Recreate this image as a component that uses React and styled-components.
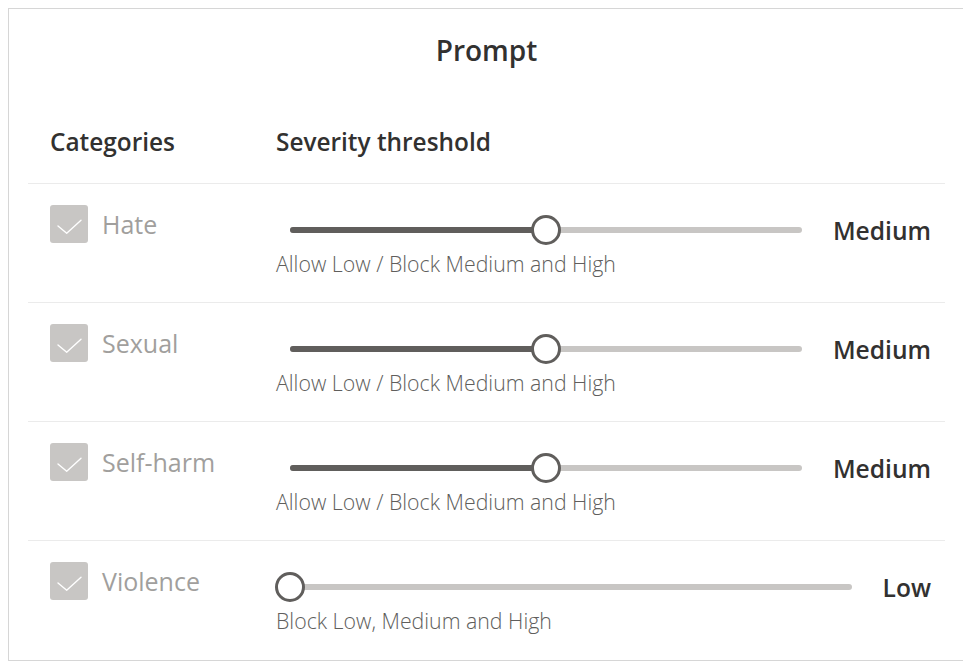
import React from "react";
import styled, { createGlobalStyle } from "styled-components";

const GlobalStyle = createGlobalStyle`
  body {
    margin: 8px;
    background: #ffffff;
    font-family: "Open Sans", "Noto Sans", sans-serif;
    color: #323130;
  }
`;

const Card = styled.div`
  width: 958px;
  height: 653px;
  border: 1px solid #d6d6d6;
  padding: 0 20px 0 19px;
  box-sizing: border-box;
`;

const Title = styled.h2`
  margin: 0;
  padding-top: 23px;
  height: 36px;
  line-height: 36px;
  text-align: center;
  font-size: 28px;
  font-weight: 600;
  color: #323130;
`;

const HeaderRow = styled.div`
  display: grid;
  grid-template-columns: 226px 1fr;
  padding: 0 14px 0 22px;
  height: 115px;
  align-items: end;
  font-size: 24.4px;
  font-weight: 600;
  color: #323130;
  line-height: 32px;
  span {
    padding-bottom: 25px;
  }
`;

const Row = styled.div`
  display: grid;
  grid-template-columns: 226px 1fr;
  height: 119px;
  box-sizing: border-box;
  border-top: 1px solid #ebebeb;
  padding: 20px 14px 0 22px;
`;

const CategoryCell = styled.label`
  display: flex;
  align-items: center;
  gap: 14px;
  height: 39px;
  align-self: start;
  font-size: 25px;
  font-weight: 400;
  color: #a19f9d;
`;

const Box = styled.span`
  width: 38px;
  height: 38px;
  border-radius: 3px;
  background: #c8c6c4;
  display: flex;
  align-items: center;
  justify-content: center;
  flex-shrink: 0;
`;

const ThresholdCell = styled.div`
  display: flex;
  flex-direction: column;
  padding-top: 12px;
`;

const SliderLine = styled.div`
  display: flex;
  align-items: center;
  height: 28px;
  gap: 17px;
`;

const SliderArea = styled.div`
  flex: 1;
  padding: 0 14px;
  height: 30px;
  display: flex;
  align-items: center;
`;

const Track = styled.div`
  position: relative;
  width: 100%;
  height: 6px;
  border-radius: 3px;
  background: #c8c6c4;
`;

const Fill = styled.div`
  position: absolute;
  left: 0;
  top: 0;
  bottom: 0;
  border-radius: 3px;
  background: #605e5c;
`;

const Thumb = styled.div`
  position: absolute;
  top: 50%;
  width: 30px;
  height: 30px;
  box-sizing: border-box;
  border-radius: 50%;
  border: 3px solid #605e5c;
  background: #ffffff;
  transform: translate(-50%, -50%);
`;

const Value = styled.span`
  font-size: 24.6px;
  font-weight: 600;
  color: #323130;
  white-space: nowrap;
`;

const Hint = styled.div`
  margin-top: 6px;
  line-height: 28px;
  font-size: 21.3px;
  font-weight: 300;
  color: #605e5c;
`;

const Check = () => (
  <svg width="38" height="38" viewBox="0 0 38 38" fill="none">
    <path
      d="M8 21 L16.7 28.3 L31 15.3"
      stroke="#ffffff"
      strokeWidth="1.4"
      strokeLinecap="round"
      strokeLinejoin="round"
    />
  </svg>
);

const levels = {
  Low: { pos: 0, hint: "Block Low, Medium and High" },
  Medium: { pos: 50, hint: "Allow Low / Block Medium and High" },
};

const categories = [
  { name: "Hate", level: "Medium" },
  { name: "Sexual", level: "Medium" },
  { name: "Self-harm", level: "Medium" },
  { name: "Violence", level: "Low" },
];

const CategoryRow = ({ name, level }) => {
  const { pos, hint } = levels[level];
  return (
    <Row>
      <CategoryCell>
        <Box>
          <Check />
        </Box>
        {name}
      </CategoryCell>
      <ThresholdCell>
        <SliderLine>
          <SliderArea>
            <Track>
              <Fill style={{ width: `${pos}%` }} />
              <Thumb style={{ left: `${pos}%` }} />
            </Track>
          </SliderArea>
          <Value>{level}</Value>
        </SliderLine>
        <Hint>{hint}</Hint>
      </ThresholdCell>
    </Row>
  );
};

export default function App() {
  return (
    <>
      <GlobalStyle />
      <Card>
        <Title>Prompt</Title>
        <HeaderRow>
          <span>Categories</span>
          <span>Severity threshold</span>
        </HeaderRow>
        {categories.map((c) => (
          <CategoryRow key={c.name} {...c} />
        ))}
      </Card>
    </>
  );
}
